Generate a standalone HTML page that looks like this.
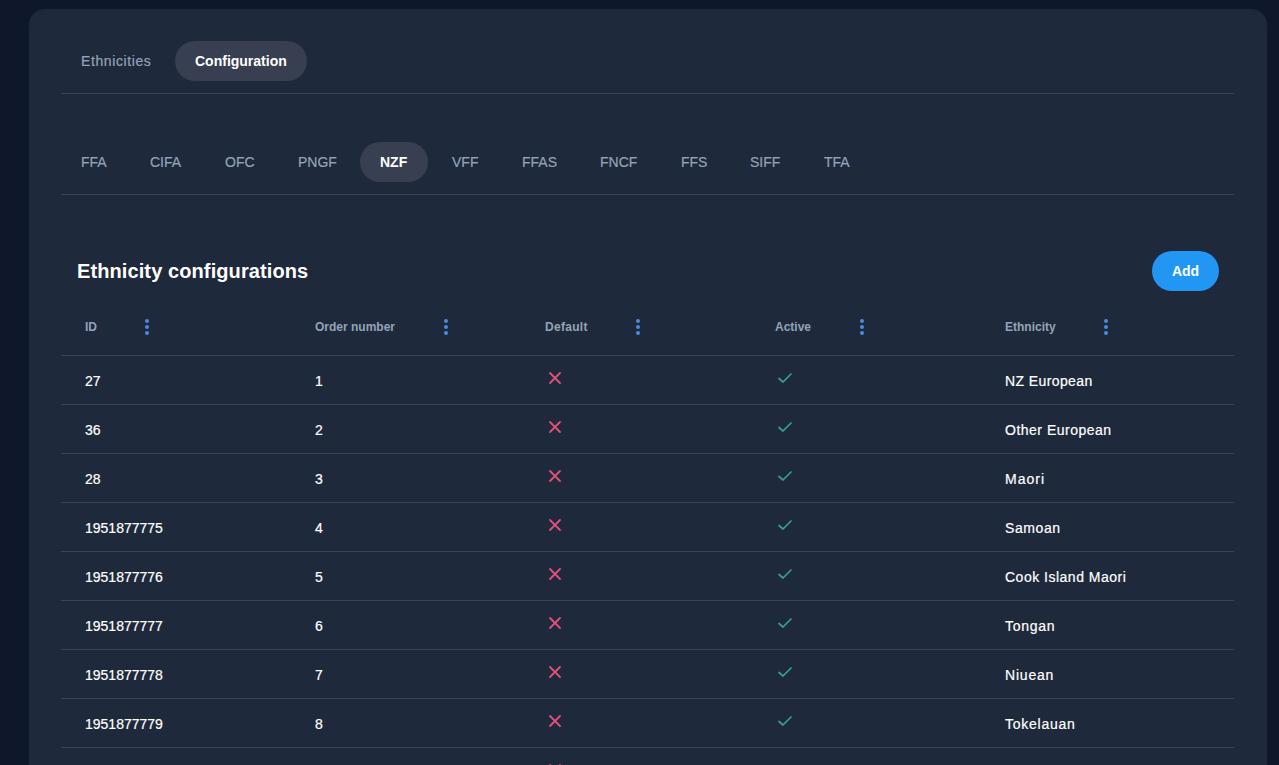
<!DOCTYPE html>
<html><head><meta charset="utf-8">
<style>
*{box-sizing:border-box;margin:0;padding:0}
html,body{width:1279px;height:765px;overflow:hidden;background:#0f172a;font-family:"Liberation Sans",sans-serif}
.card{position:absolute;left:29px;top:9px;width:1238px;height:800px;background:#1e293b;border-radius:16px}
.abs{position:absolute;white-space:nowrap}
.tab{font-size:14px;color:#94a3b8;line-height:16px;-webkit-text-stroke:0.2px currentColor}
.pill{position:absolute;background:#373f50;border-radius:20px;height:40px}
.act{color:#fff;font-weight:bold;-webkit-text-stroke:0}
.hr{position:absolute;left:61px;width:1173px;height:1px;background:#394456}
.h1{font-size:20px;font-weight:bold;color:#fff;line-height:24px}
.btn{position:absolute;left:1152px;top:251px;width:67px;height:40px;border-radius:20px;background:#2196f3;color:#fff;font-weight:bold;font-size:14px;text-align:center;line-height:40px}
.th{font-size:12px;font-weight:bold;color:#94a3b8;line-height:14px}
.keb{position:absolute;width:4px;height:16px}
.keb i{display:block;width:4px;height:4px;border-radius:2px;background:#4a8ce0;margin-bottom:2px}
.td{font-size:14px;color:#fff;line-height:16px;-webkit-text-stroke:0.2px #fff}
.ic{position:absolute}
</style></head><body>
<div class="card"></div>
<!-- top tabs -->
<div class="abs tab" style="left:81px;top:53px;letter-spacing:0.6px">Ethnicities</div>
<div class="pill" style="left:175px;top:41px;width:132px"></div>
<div class="abs tab act" style="left:195px;top:53px">Configuration</div>
<div class="hr" style="top:93px"></div>
<!-- federation tabs -->
<div class="pill" style="left:360px;top:142px;width:68px"></div>
<div class="abs tab" style="left:81px;top:154px">FFA</div>
<div class="abs tab" style="left:150px;top:154px">CIFA</div>
<div class="abs tab" style="left:225px;top:154px">OFC</div>
<div class="abs tab" style="left:298px;top:154px">PNGF</div>
<div class="abs tab act" style="left:380px;top:154px">NZF</div>
<div class="abs tab" style="left:452px;top:154px">VFF</div>
<div class="abs tab" style="left:522px;top:154px">FFAS</div>
<div class="abs tab" style="left:600px;top:154px">FNCF</div>
<div class="abs tab" style="left:681px;top:154px">FFS</div>
<div class="abs tab" style="left:750px;top:154px">SIFF</div>
<div class="abs tab" style="left:824px;top:154px">TFA</div>
<div class="hr" style="top:194px"></div>
<!-- heading -->
<div class="abs h1" style="left:77px;top:259px;letter-spacing:0.1px">Ethnicity configurations</div>
<div class="btn">Add</div>
<!-- header -->
<div class="abs th" style="left:85px;top:320px">ID</div>
<div class="keb" style="left:145px;top:319px"><i></i><i></i><i></i></div>
<div class="abs th" style="left:315px;top:320px">Order number</div>
<div class="keb" style="left:444px;top:319px"><i></i><i></i><i></i></div>
<div class="abs th" style="left:545px;top:320px;letter-spacing:0.3px">Default</div>
<div class="keb" style="left:636px;top:319px"><i></i><i></i><i></i></div>
<div class="abs th" style="left:775px;top:320px">Active</div>
<div class="keb" style="left:860px;top:319px"><i></i><i></i><i></i></div>
<div class="abs th" style="left:1005px;top:320px">Ethnicity</div>
<div class="keb" style="left:1104px;top:319px"><i></i><i></i><i></i></div>
<div class="hr" style="top:355px"></div>
<div id="rows">
<div class="abs td" style="left:85px;top:373px">27</div>
<div class="abs td" style="left:315px;top:373px">1</div>
<svg class="ic" style="left:548px;top:371px" width="14" height="14" viewBox="0 0 14 14"><path d="M2 2L12 12M12 2L2 12" stroke="#e2507a" stroke-width="1.8" stroke-linecap="round"/></svg>
<svg class="ic" style="left:777px;top:371px" width="16" height="14" viewBox="0 0 16 14"><path d="M2 7.5L6 11L14 3" fill="none" stroke="#34a096" stroke-width="1.7" stroke-linecap="round" stroke-linejoin="round"/></svg>
<div class="abs td" style="left:1005px;top:373px;letter-spacing:0.4px">NZ European</div>
<div class="hr" style="top:404px"></div>
<div class="abs td" style="left:85px;top:422px">36</div>
<div class="abs td" style="left:315px;top:422px">2</div>
<svg class="ic" style="left:548px;top:420px" width="14" height="14" viewBox="0 0 14 14"><path d="M2 2L12 12M12 2L2 12" stroke="#e2507a" stroke-width="1.8" stroke-linecap="round"/></svg>
<svg class="ic" style="left:777px;top:420px" width="16" height="14" viewBox="0 0 16 14"><path d="M2 7.5L6 11L14 3" fill="none" stroke="#34a096" stroke-width="1.7" stroke-linecap="round" stroke-linejoin="round"/></svg>
<div class="abs td" style="left:1005px;top:422px;letter-spacing:0.5px">Other European</div>
<div class="hr" style="top:453px"></div>
<div class="abs td" style="left:85px;top:471px">28</div>
<div class="abs td" style="left:315px;top:471px">3</div>
<svg class="ic" style="left:548px;top:469px" width="14" height="14" viewBox="0 0 14 14"><path d="M2 2L12 12M12 2L2 12" stroke="#e2507a" stroke-width="1.8" stroke-linecap="round"/></svg>
<svg class="ic" style="left:777px;top:469px" width="16" height="14" viewBox="0 0 16 14"><path d="M2 7.5L6 11L14 3" fill="none" stroke="#34a096" stroke-width="1.7" stroke-linecap="round" stroke-linejoin="round"/></svg>
<div class="abs td" style="left:1005px;top:471px;letter-spacing:1.0px">Maori</div>
<div class="hr" style="top:502px"></div>
<div class="abs td" style="left:85px;top:520px">1951877775</div>
<div class="abs td" style="left:315px;top:520px">4</div>
<svg class="ic" style="left:548px;top:518px" width="14" height="14" viewBox="0 0 14 14"><path d="M2 2L12 12M12 2L2 12" stroke="#e2507a" stroke-width="1.8" stroke-linecap="round"/></svg>
<svg class="ic" style="left:777px;top:518px" width="16" height="14" viewBox="0 0 16 14"><path d="M2 7.5L6 11L14 3" fill="none" stroke="#34a096" stroke-width="1.7" stroke-linecap="round" stroke-linejoin="round"/></svg>
<div class="abs td" style="left:1005px;top:520px;letter-spacing:0.6px">Samoan</div>
<div class="hr" style="top:551px"></div>
<div class="abs td" style="left:85px;top:569px">1951877776</div>
<div class="abs td" style="left:315px;top:569px">5</div>
<svg class="ic" style="left:548px;top:567px" width="14" height="14" viewBox="0 0 14 14"><path d="M2 2L12 12M12 2L2 12" stroke="#e2507a" stroke-width="1.8" stroke-linecap="round"/></svg>
<svg class="ic" style="left:777px;top:567px" width="16" height="14" viewBox="0 0 16 14"><path d="M2 7.5L6 11L14 3" fill="none" stroke="#34a096" stroke-width="1.7" stroke-linecap="round" stroke-linejoin="round"/></svg>
<div class="abs td" style="left:1005px;top:569px;letter-spacing:0.5px">Cook Island Maori</div>
<div class="hr" style="top:600px"></div>
<div class="abs td" style="left:85px;top:618px">1951877777</div>
<div class="abs td" style="left:315px;top:618px">6</div>
<svg class="ic" style="left:548px;top:616px" width="14" height="14" viewBox="0 0 14 14"><path d="M2 2L12 12M12 2L2 12" stroke="#e2507a" stroke-width="1.8" stroke-linecap="round"/></svg>
<svg class="ic" style="left:777px;top:616px" width="16" height="14" viewBox="0 0 16 14"><path d="M2 7.5L6 11L14 3" fill="none" stroke="#34a096" stroke-width="1.7" stroke-linecap="round" stroke-linejoin="round"/></svg>
<div class="abs td" style="left:1005px;top:618px;letter-spacing:0.7px">Tongan</div>
<div class="hr" style="top:649px"></div>
<div class="abs td" style="left:85px;top:667px">1951877778</div>
<div class="abs td" style="left:315px;top:667px">7</div>
<svg class="ic" style="left:548px;top:665px" width="14" height="14" viewBox="0 0 14 14"><path d="M2 2L12 12M12 2L2 12" stroke="#e2507a" stroke-width="1.8" stroke-linecap="round"/></svg>
<svg class="ic" style="left:777px;top:665px" width="16" height="14" viewBox="0 0 16 14"><path d="M2 7.5L6 11L14 3" fill="none" stroke="#34a096" stroke-width="1.7" stroke-linecap="round" stroke-linejoin="round"/></svg>
<div class="abs td" style="left:1005px;top:667px;letter-spacing:0.8px">Niuean</div>
<div class="hr" style="top:698px"></div>
<div class="abs td" style="left:85px;top:716px">1951877779</div>
<div class="abs td" style="left:315px;top:716px">8</div>
<svg class="ic" style="left:548px;top:714px" width="14" height="14" viewBox="0 0 14 14"><path d="M2 2L12 12M12 2L2 12" stroke="#e2507a" stroke-width="1.8" stroke-linecap="round"/></svg>
<svg class="ic" style="left:777px;top:714px" width="16" height="14" viewBox="0 0 16 14"><path d="M2 7.5L6 11L14 3" fill="none" stroke="#34a096" stroke-width="1.7" stroke-linecap="round" stroke-linejoin="round"/></svg>
<div class="abs td" style="left:1005px;top:716px;letter-spacing:0.75px">Tokelauan</div>
<div class="hr" style="top:747px"></div>
<div class="abs td" style="left:85px;top:765px"></div>
<div class="abs td" style="left:315px;top:765px">9</div>
<svg class="ic" style="left:548px;top:763px" width="14" height="14" viewBox="0 0 14 14"><path d="M2 2L12 12M12 2L2 12" stroke="#e2507a" stroke-width="1.8" stroke-linecap="round"/></svg>
<svg class="ic" style="left:777px;top:763px" width="16" height="14" viewBox="0 0 16 14"><path d="M2 7.5L6 11L14 3" fill="none" stroke="#34a096" stroke-width="1.7" stroke-linecap="round" stroke-linejoin="round"/></svg>
<div class="abs td" style="left:1005px;top:765px"></div>
<div class="hr" style="top:796px"></div>
</div>
</body></html>
